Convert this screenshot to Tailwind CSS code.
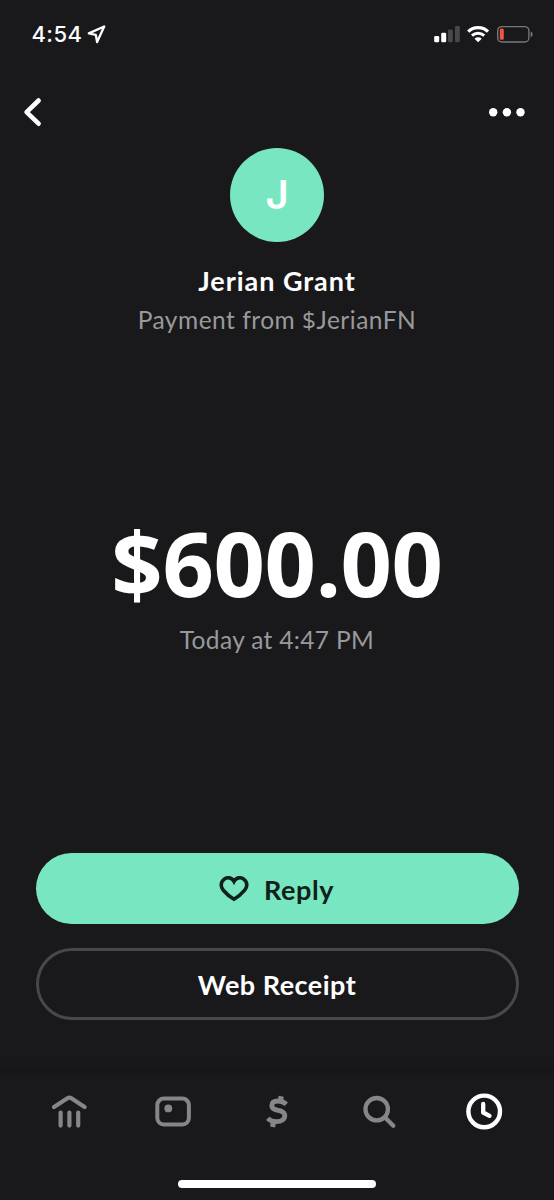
<!DOCTYPE html>
<html lang="en">
<head>
<meta charset="utf-8">
<meta name="viewport" content="width=device-width, initial-scale=1">
<title>Payment</title>
<script src="https://cdn.jsdelivr.net/npm/@tailwindcss/browser@4"></script>
</head>
<body class="bg-[#19191b]">
<main class="flex h-[1200px] w-[554px] flex-col overflow-hidden bg-[#19191b] font-['Lato',sans-serif] text-white">
  <!-- Status bar -->
  <div class="flex h-[68px] shrink-0 items-center justify-between pr-[20px] pl-[31.5px]">
    <div class="flex items-center gap-[5px]">
      <span class="w-[50px] font-['Inter',sans-serif] text-[22px] leading-none font-medium tracking-[0.4px] whitespace-nowrap">4:54</span>
      <svg class="h-[20px] w-[20px]" viewBox="0 0 20 20" fill="none" stroke="#fff" stroke-width="2.3" stroke-linejoin="round"><path d="M17.2 2.5 1.8 9.4l7 1.5L10.1 18Z"/></svg>
    </div>
    <svg class="h-[20px] w-[100px]" viewBox="434 24 100 20">
      <rect x="434.2" y="36" width="5" height="6.2" rx="1.3" fill="#fff"/>
      <rect x="441.2" y="32.8" width="5" height="9.4" rx="1.3" fill="#fff"/>
      <rect x="448" y="29.6" width="4.8" height="12.6" rx="1.3" fill="#48484a"/>
      <rect x="455" y="26" width="4.8" height="16.2" rx="1.3" fill="#48484a"/>
      <path d="M468.2 31.6a14.4 14.4 0 0 1 19.8 0" fill="none" stroke="#fff" stroke-width="3.3"/>
      <path d="M472 35.7a9 9 0 0 1 12.2 0" fill="none" stroke="#fff" stroke-width="3"/>
      <path d="M478.1 42.3l-3.6-3.5a5.2 5.2 0 0 1 7.2 0Z" fill="#fff"/>
      <rect x="497.7" y="26.6" width="31.2" height="15.4" rx="4.2" fill="none" stroke="#77777a" stroke-width="1.4"/>
      <rect x="499.8" y="28.6" width="4" height="11.2" rx="1.5" fill="#ec5545"/>
      <path d="M530.7 31.6c2.6.8 2.6 4.8 0 5.6Z" fill="#77777a"/>
    </svg>
  </div>
  <!-- Navigation -->
  <header class="flex h-[80px] shrink-0 items-center justify-between pt-[8px] pr-[28px] pl-[22px]">
    <svg class="h-[32px] w-[22px]" viewBox="0 0 22 32" fill="none" stroke="#fff" stroke-width="4.6" stroke-linecap="round" stroke-linejoin="round"><path d="M16.6 4.5 4.6 16.1l12 11.6"/></svg>
    <svg class="h-[10px] w-[38px]" viewBox="0 0 38 10" fill="#fff"><circle cx="5.2" cy="5.2" r="4.2"/><circle cx="18.9" cy="5.2" r="4.2"/><circle cx="32.5" cy="5.2" r="4.2"/></svg>
  </header>
  <!-- Sender -->
  <section class="flex h-[370px] shrink-0 flex-col items-center">
    <div class="flex h-[94px] w-[94px] items-center justify-center rounded-full bg-[#78e7c1] pb-[1px] font-['Inter',sans-serif] text-[40px] leading-none font-semibold">J</div>
    <h1 class="mt-[23px] text-[27px] leading-[32px] font-bold tracking-[0.95px]">Jerian Grant</h1>
    <p class="mt-[8px] text-[24.5px] leading-[30px] tracking-[0.5px] text-[#99999b]">Payment from <span class="font-['Open_Sans',sans-serif] leading-none">$</span>JerianFN</p>
  </section>
  <!-- Amount -->
  <section class="flex h-[335px] shrink-0 flex-col items-center">
    <div class="h-[94px] font-['Noto_Sans',sans-serif] text-[90px] leading-[89px] font-bold tracking-[-0.4px]">$600.00</div>
    <p class="mt-[13px] text-[24.5px] leading-[30px] tracking-[0.35px] text-[#99999b]">Today at 4:47 PM</p>
  </section>
  <!-- Actions -->
  <div class="flex h-[207px] shrink-0 flex-col gap-[24px] px-[35.5px]">
    <button class="flex h-[71px] items-center justify-center gap-[15px] rounded-full bg-[#78e7c1] pr-[1px] text-[27px] font-bold tracking-[0.6px] text-[#10201b]">
      <svg class="h-[26px] w-[30px]" viewBox="0 0 30 26" fill="none" stroke="currentColor" stroke-width="3.6" stroke-linejoin="miter"><path d="M15 5.5C12.6 1.1 8 .9 5 3.4 1.3 6.4 1.5 11 4.3 14.2 7 17.4 10.7 20.8 15 23.2c4.3-2.4 8-5.8 10.7-9C28.5 11 28.7 6.4 25 3.4 22 .9 17.4 1.1 15 5.5Z"/></svg>
      <span class="pt-[3px]">Reply</span>
    </button>
    <button class="flex h-[71.5px] items-center justify-center rounded-full border-[3px] border-[#48484a] pt-[2px] text-[27px] font-bold tracking-[0.5px]">Web Receipt</button>
  </div>
  <div class="h-[13px] shrink-0 bg-linear-to-b from-[#19191b] to-[#161618]"></div>
  <!-- Tab bar -->
  <nav class="flex h-[107px] shrink-0 items-start justify-between pt-[18px] pr-[50px] pl-[49px] text-[#868688]">
    <svg class="h-[40px] w-[40px]" viewBox="0 0 40 40" fill="none" stroke="currentColor" stroke-width="4.2" stroke-linecap="round" stroke-linejoin="round"><path d="M5 16 18.4 7.2q2-1.2 4 0L35.6 16M11.6 21.6v13M20.4 21.6v13M29.2 21.6v13"/></svg>
    <svg class="h-[40px] w-[40px]" viewBox="0 0 40 40" fill="none" stroke="currentColor" stroke-width="4"><rect x="4.3" y="7.6" width="31.6" height="26" rx="6.5"/><circle cx="15.3" cy="17.4" r="3.9" fill="currentColor" stroke="none"/></svg>
    <svg class="h-[40px] w-[40px]" viewBox="0 0 40 40" fill="none" stroke="currentColor"><path d="M29.3 13.3C27 11.1 24.5 10 21.1 10c-4 0-6.3 1.7-6.3 4.5 0 7 13 2.9 13 10.1 0 4-3.5 6-8.1 6-4 0-6.9-1.1-9-3.3" stroke-width="4.8"/><path d="m23.4 10 .8-4.8M15.6 36l.8-5" stroke-width="5.2"/></svg>
    <svg class="h-[40px] w-[40px]" viewBox="0 0 40 40" fill="none" stroke="currentColor" stroke-width="4.3" stroke-linecap="round"><circle cx="16.7" cy="18.2" r="11.2"/><path d="m25.3 26.8 8 8"/></svg>
    <svg class="h-[40px] w-[40px] text-white" viewBox="0 0 40 40" fill="none" stroke="currentColor" stroke-width="4.3" stroke-linecap="round" stroke-linejoin="round"><circle cx="20.2" cy="20.4" r="15.8" stroke-width="4.4"/><path d="M19.2 13v8.5l6.3 3.3"/></svg>
  </nav>
  <div class="mx-auto h-[8px] w-[198px] shrink-0 rounded-full bg-white"></div>
</main>
</body>
</html>
